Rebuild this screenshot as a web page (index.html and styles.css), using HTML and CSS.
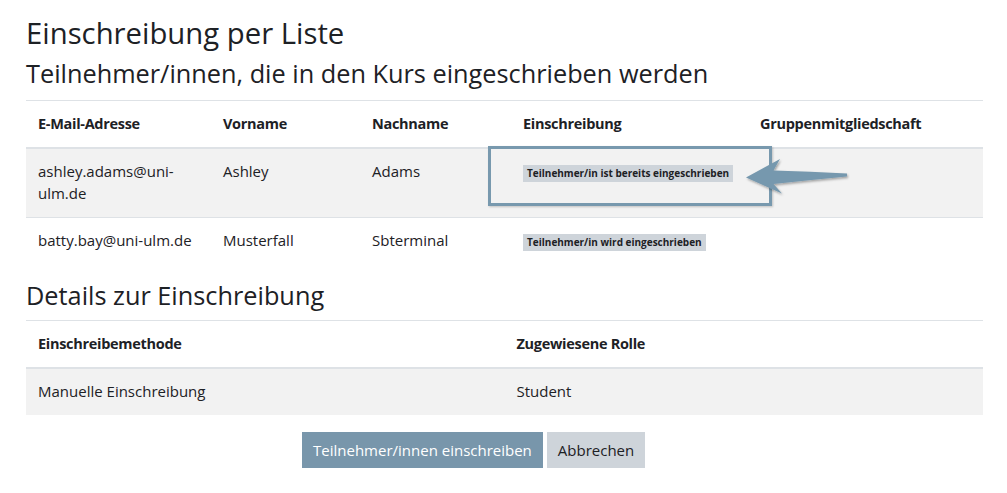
FILE: index.html
```html
<!DOCTYPE html>
<html lang="de">
<head>
<meta charset="utf-8">
<title>Einschreibung per Liste</title>
<link rel="stylesheet" href="styles.css">
</head>
<body>
<div class="page">
  <h2 class="title">Einschreibung per Liste</h2>
  <h3 class="subtitle">Teilnehmer/innen, die in den Kurs eingeschrieben werden</h3>
  <div class="table-wrap">
    <table class="gtable users">
      <colgroup>
        <col class="c-mail"><col class="c-first"><col class="c-last"><col class="c-enrol"><col class="c-group">
      </colgroup>
      <thead>
        <tr><th>E-Mail-Adresse</th><th>Vorname</th><th>Nachname</th><th>Einschreibung</th><th>Gruppenmitgliedschaft</th></tr>
      </thead>
      <tbody>
        <tr class="odd"><td>ashley.adams@uni-ulm.de</td><td>Ashley</td><td>Adams</td><td><span class="badge">Teilnehmer/in ist bereits eingeschrieben</span></td><td></td></tr>
        <tr><td>batty.bay@uni-ulm.de</td><td>Musterfall</td><td>Sbterminal</td><td><span class="badge">Teilnehmer/in wird eingeschrieben</span></td><td></td></tr>
      </tbody>
    </table>
    <div class="highlight"></div>
    <svg class="arrow" width="120" height="60" viewBox="740 150 120 60" aria-hidden="true">
      <defs>
        <filter id="sh" x="-20%" y="-40%" width="140%" height="180%">
          <feDropShadow dx="1" dy="1.5" stdDeviation="1.2" flood-color="#000" flood-opacity="0.35"/>
        </filter>
      </defs>
      <path d="M746,177.5 L780,159 L773.5,170.5 Q810,171.5 847,173.5 L847,176.5 Q810,180 773.5,184 L782,193.5 Z" fill="#7698ae" filter="url(#sh)"/>
    </svg>
  </div>
  <h3 class="subtitle details">Details zur Einschreibung</h3>
  <table class="gtable method">
    <colgroup><col class="half"><col class="half"></colgroup>
    <thead>
      <tr><th>Einschreibemethode</th><th>Zugewiesene Rolle</th></tr>
    </thead>
    <tbody>
      <tr class="odd"><td>Manuelle Einschreibung</td><td>Student</td></tr>
    </tbody>
  </table>
  <div class="buttons">
    <button class="btn btn-primary" type="button">Teilnehmer/innen einschreiben</button>
    <button class="btn btn-secondary" type="button">Abbrechen</button>
  </div>
</div>
</body>
</html>
```

FILE: styles.css
```css
html, body {
  margin: 0;
  padding: 0;
  background: #ffffff;
}
body {
  font-family: "Open Sans", "Noto Sans", sans-serif;
  color: #1d2125;
  font-size: 15px;
  line-height: 22px;
}
.page {
  width: 957px;
  padding: 16px 0 0 26px;
}
.title {
  font-size: 29.3px;
  font-weight: 400;
  line-height: 35px;
  margin: 0 0 7px 0;
}
.subtitle {
  font-size: 25.3px;
  font-weight: 400;
  line-height: 30px;
  margin: 0 0 12px 0;
}
.subtitle.details {
  margin: 0 0 10px 0;
}
.table-wrap {
  position: relative;
}
.gtable {
  width: 957px;
  table-layout: fixed;
  border-collapse: separate;
  border-spacing: 0;
  margin-bottom: 16px;
}
.c-mail { width: 185px; }
.c-first { width: 149px; }
.c-last { width: 151px; }
.c-enrol { width: 237px; }
.c-group { width: 235px; }
.half { width: 50%; }
.gtable th,
.gtable td {
  padding: 12px;
  text-align: left;
  vertical-align: top;
}
.gtable td {
  padding-top: 11px;
  padding-bottom: 13px;
}
.gtable th {
  font-size: 14.5px;
  font-weight: 700;
  letter-spacing: -0.3px;
  border-top: 1px solid #dee2e6;
  border-bottom: 2px solid #dee2e6;
}
.gtable tbody tr + tr td {
  border-top: 1px solid #dee2e6;
}
.gtable tr.odd td {
  background: #f2f2f2;
}
.badge {
  display: inline-block;
  background: #ced4da;
  color: #1d2125;
  font-size: 10px;
  font-weight: 700;
  line-height: 1;
  padding: 3px 4px 4px;
  white-space: nowrap;
  vertical-align: baseline;
}
.highlight {
  position: absolute;
  left: 462px;
  top: 46px;
  width: 278px;
  height: 54px;
  border: 3px solid #7899ae;
  box-shadow: 1px 1px 2px rgba(0, 0, 0, 0.2);
  pointer-events: none;
}
.arrow {
  position: absolute;
  left: 714px;
  top: 50px;
  overflow: visible;
}
.buttons {
  display: flex;
  gap: 4px;
  padding-left: 276px;
  margin-top: 17px;
}
.btn {
  font-family: inherit;
  font-size: 15px;
  line-height: 22px;
  padding: 7px 11px;
  border: 0;
  border-radius: 0;
  cursor: pointer;
}
.btn-primary {
  background: #7896ab;
  color: #ffffff;
}
.btn-secondary {
  background: #ced4da;
  color: #1d2125;
}
```
